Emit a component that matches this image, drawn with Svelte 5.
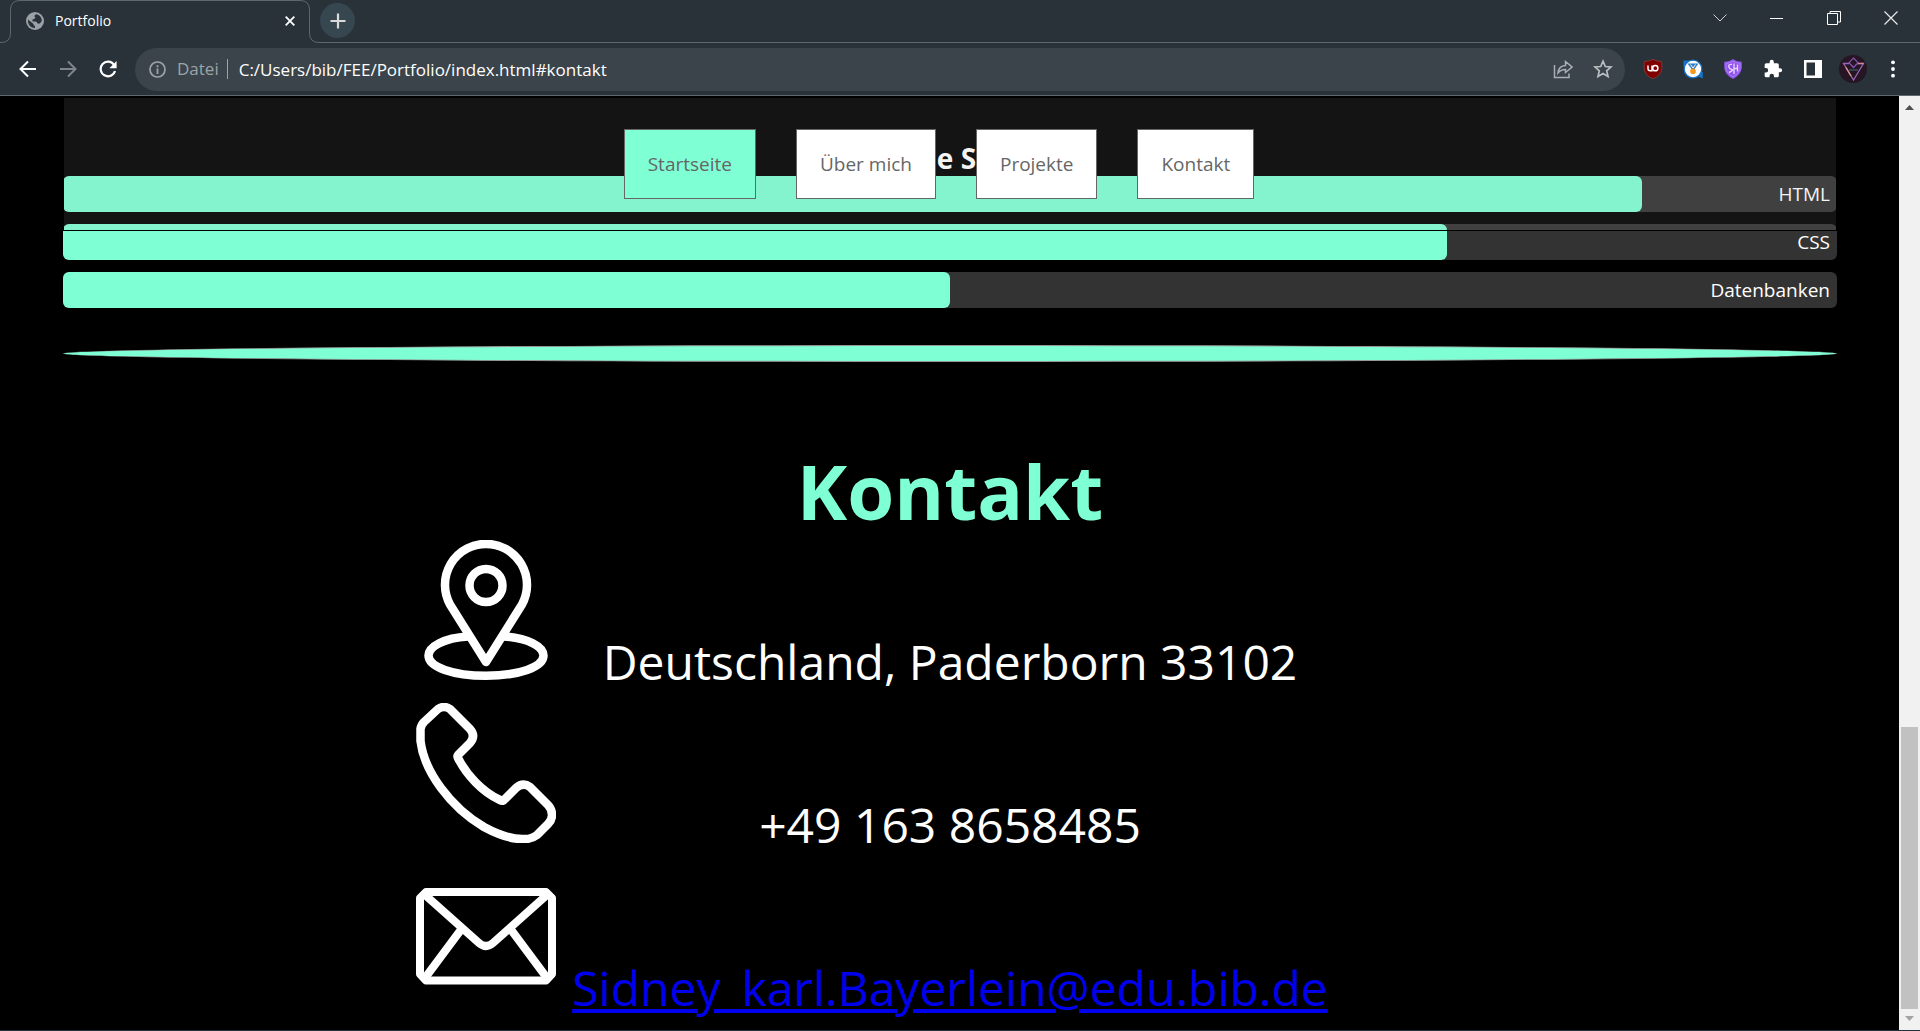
<script>
  const nav = [
    { label: 'Startseite', href: '#start', active: true },
    { label: 'Über mich', href: '#ueber-mich' },
    { label: 'Projekte', href: '#projekte' },
    { label: 'Kontakt', href: '#kontakt' }
  ];
  const skills = [
    { name: 'HTML', level: 89 },
    { name: 'CSS', level: 78 },
    { name: 'Datenbanken', level: 50 }
  ];
</script>

<div class="window">
  <header class="chrome">
    <div class="tabstrip">
      <svg class="outline" viewBox="0 0 320 43" aria-hidden="true">
        <path d="M0 42.500H1Q10.500 42.500 10.500 33V10Q10.500.500 20 .500H300Q309.500.500 309.500 10V33Q309.500 42.500 319 42.500H320" fill="none" stroke="#5b686d" />
      </svg>
      <div class="tab">
        <svg width="18" height="18" viewBox="0 0 18 18" aria-hidden="true">
          <circle cx="9" cy="9" r="9" fill="#9ba2a6" />
          <path d="M10.500 2.200C8 3 8 5 9.500 5.300C8.500 7.500 7.500 7 6.500 7.500V9.500H9.500C11 9.500 10.500 11 12 11.500C13.500 12 14.500 11 15.800 9C16 6.500 14.500 4 12.500 3ZM2 7.500L7.500 12C7.500 13.500 8.500 13.500 9 14V16C5 16 1.500 12.500 2 7.500Z" fill="#283238" />
        </svg>
        <span class="title">Portfolio</span>
        <button aria-label="Tab schließen">
          <svg width="10" height="10" viewBox="0 0 10 10"><path d="M.7.7L9.300 9.300M9.300.7L.7 9.300" stroke="#fff" stroke-width="1.800" /></svg>
        </button>
      </div>
      <button class="newtab" aria-label="Neuer Tab">
        <svg width="16" height="16" viewBox="0 0 16 16"><path d="M8 .5V15.500M.5 8H15.500" stroke="#dadada" stroke-width="2.200" /></svg>
      </button>
      <div class="controls">
        <button aria-label="Tabs durchsuchen"><svg width="14" height="14" viewBox="0 0 14 14"><path d="M.5 3.500L7 10L13.500 3.500" fill="none" stroke="#cfd2d4" /></svg></button>
        <button aria-label="Minimieren"><svg width="14" height="14" viewBox="0 0 14 14"><path d="M0 7.500H13" stroke="#fff" /></svg></button>
        <button aria-label="Verkleinern"><svg width="14" height="14" viewBox="0 0 14 14"><path d="M.5 2.500H10.500V13.500H.5ZM3 2V.500H13.500V11H11" fill="none" stroke="#fff" /></svg></button>
        <button aria-label="Schließen"><svg width="14" height="14" viewBox="0 0 14 14"><path d="M.5.5L13.500 13.500M13.500.5L.5 13.500" stroke="#e8e8e8" stroke-width="1.200" /></svg></button>
      </div>
    </div>
    <div class="toolbar">
      <button class="tool" aria-label="Zurück"><svg width="18" height="18" viewBox="0 0 18 18"><path d="M17 9H2M9 1.500L1.500 9L9 16.500" fill="none" stroke="#fff" stroke-width="2" /></svg></button>
      <button class="tool" aria-label="Vorwärts"><svg width="18" height="18" viewBox="0 0 18 18"><path d="M1 9H16M9 1.500L16.500 9L9 16.500" fill="none" stroke="#7f868a" stroke-width="2" /></svg></button>
      <button class="tool" aria-label="Neu laden"><svg width="18" height="18" viewBox="0 0 18 18"><path d="M15 4.800A7.300 7.300 0 1 0 16 11" fill="none" stroke="#fff" stroke-width="2.200" /><path d="M17.600 1V8.200H10.400Z" fill="#fff" /></svg></button>
      <div class="omnibox">
        <svg width="17" height="17" viewBox="0 0 17 17" aria-hidden="true"><circle cx="8.500" cy="8.500" r="7.500" fill="none" stroke="#9da4a8" stroke-width="1.700" /><path d="M8.500 7.500V13M8.500 4.200V6.200" stroke="#9da4a8" stroke-width="1.800" /></svg>
        <label for="url">Datei</label>
        <input id="url" type="text" value="C:/Users/bib/FEE/Portfolio/index.html#kontakt" />
        <button class="tool" aria-label="Teilen"><svg width="20" height="20" viewBox="0 0 20 20"><path d="M1.500 6V18.500H16V14.500M5 14Q5.500 7 12.500 6.500V2.500L19 8L12.500 13.500V10.500Q8 10.500 5 14Z" fill="none" stroke="#a9afb2" stroke-width="1.500" /></svg></button>
        <button class="tool" aria-label="Lesezeichen"><svg width="20" height="20" viewBox="0 0 20 20"><path d="M10 2.200L12.300 7.500L18 8L13.700 11.800L15 17.400L10 14.400L5 17.400L6.300 11.800L2 8L7.700 7.500Z" fill="none" stroke="#b9bec1" stroke-width="1.700" /></svg></button>
      </div>
      <div class="extensions">
        <button class="tool" aria-label="uBlock Origin"><svg width="20" height="20" viewBox="0 0 20 20"><path d="M10 .3Q14 2.500 18.800 2.500V10Q18 16.500 10 19.800Q2 16.500 1.200 10V2.500Q6 2.500 10 .3Z" fill="#800000" stroke="#9a4a4e" stroke-width=".600" /><path d="M5 6.500V9.500Q5 11.800 7.200 11.800H9V6.500" fill="none" stroke="#fff" stroke-width="1.500" /><circle cx="12.300" cy="9.200" r="2.600" fill="none" stroke="#fff" stroke-width="1.500" /></svg></button>
        <button class="tool" aria-label="Erweiterung"><svg width="20" height="20" viewBox="0 0 20 20"><path d="M.5 1.500H6V8H.5ZM13 13H19.800V19.500L14 17Z" fill="#1673c8" /><circle cx="10" cy="10" r="8.800" fill="#fff" stroke="#1673c8" stroke-width="1.300" /><path d="M4.500 4.500H15.500L11.500 10H8.500Z" fill="#2d7cc4" /><path d="M7.500 5.500L10 9L12.500 5.500" fill="none" stroke="#fff" /><circle cx="10" cy="12.300" r="2.800" fill="#f8981d" /></svg></button>
        <button class="tool" aria-label="Schutz"><svg width="20" height="20" viewBox="0 0 20 20"><path d="M10 0Q13 2.500 18.800 2.800V9Q18 16 10 20Q2 16 1.200 9V2.800Q7 2.500 10 0Z" fill="#9154ee" /><path d="M10 2.200Q13 4 17 4.300V9Q16.300 14.500 10 17.800Q3.700 14.500 3 9V4.300Q7 4 10 2.200Z" fill="none" stroke="#b48af5" stroke-width=".800" /><path d="M9 5.500Q5.300 5 5.800 7.500T8.800 10.500T6 13.500M11 4.500V15M14.500 5.500V12.500M11 9.500H14.500" fill="none" stroke="#e4d2ff" stroke-width="1.400" /></svg></button>
        <button class="tool" aria-label="Erweiterungen"><svg width="20" height="20" viewBox="0 0 24 24"><path d="M20.500 11H19V7a2 2 0 0 0-2-2h-4V3.500a2.500 2.500 0 0 0-5 0V5H4a2 2 0 0 0-2 2v3.800h1.500a2.700 2.700 0 0 1 0 5.400H2V20a2 2 0 0 0 2 2h3.800v-1.500a2.700 2.700 0 0 1 5.400 0V22H17a2 2 0 0 0 2-2v-4h1.500a2.500 2.500 0 0 0 0-5Z" fill="#fff" /></svg></button>
        <button class="tool" aria-label="Seitenleiste"><svg width="20" height="20" viewBox="0 0 20 20"><path d="M1 1H19V19H1ZM3.500 3.500V16.500H12V3.500Z" fill="#fff" fill-rule="evenodd" /></svg></button>
        <button class="tool" aria-label="Profil"><svg width="28" height="28" viewBox="0 0 28 28"><circle cx="14" cy="14" r="14" fill="#261523" /><path d="M10 8.500H4.500L14.500 25L24.500 8.500H18" fill="none" stroke="#9a66b4" stroke-width="1.300" /><path d="M7 12.500L12 21" stroke="#e39a91" stroke-width="1.300" /><path d="M18 8.500H24.500" stroke="#d88a91" stroke-width="1.300" /><path d="M14.500 3L19 7.700L14.500 12.500L10 7.700Z" fill="none" stroke="#8754b5" stroke-width="1.200" /><path d="M10 15H19" stroke="#38717e" /></svg></button>
        <button class="tool" aria-label="Menü"><svg width="20" height="20" viewBox="0 0 20 20"><circle cx="10" cy="3.300" r="1.900" fill="#fff" /><circle cx="10" cy="10" r="1.900" fill="#fff" /><circle cx="10" cy="16.700" r="1.900" fill="#fff" /></svg></button>
      </div>
    </div>
  </header>

  <div class="viewport">
    <main class="page">
      <nav>
        {#each nav as item}
          <a href={item.href} class:active={item.active}>{item.label}</a>
        {/each}
      </nav>

      <section class="skills">
        <h2>Meine Skills</h2>
        {#each skills as skill}
          <div class="bar">
            <div class="fill" style="width: {skill.level}%"></div>
            <span>{skill.name}</span>
          </div>
        {/each}
      </section>

      <hr />

      <section class="contact" id="kontakt">
        <h1>Kontakt</h1>
        <div class="row">
          <svg viewBox="0 0 140 140" aria-hidden="true" fill="none" stroke="#fff" stroke-width="8.500" stroke-linejoin="round">
            <path d="M70 122L34 64.500A41 41 0 1 1 106 64.500Z" />
            <circle cx="70" cy="45.500" r="16.500" />
            <path d="M52 96.500C28 98 12.500 106.500 12.500 115.500C12.500 127 37 135.700 70 135.700S127.500 127 127.500 115.500C127.500 106.500 112 98 88 96.500" />
          </svg>
          <p>Deutschland, Paderborn 33102</p>
        </div>
        <div class="row">
          <svg viewBox="0 0 140 140" aria-hidden="true" fill="none" stroke="#fff" stroke-width="8.500" stroke-linejoin="round">
            <path d="M22 6Q28 2 34 6L54 26Q60 33 54 40L42 52Q41 53 42 55C50 71 66 89 84 97Q87 99 89 96L100 85Q107 79 114 84L132 102Q136 106 136 112Q136 117 132 121L121 132Q116 136 109 136Q92 137 68 124C34 104 8 68 4.500 38V26Q5 22 8 19Z" />
          </svg>
          <p>+49 163 8658485</p>
        </div>
        <div class="row">
          <svg viewBox="0 0 140 140" aria-hidden="true" fill="none" stroke="#fff" stroke-width="8" stroke-linejoin="round">
            <path d="M10 26H130L136 32V108L130 114.500H10L4 108V32Z" />
            <path d="M8 28L63 77Q70 83 77 77L132 28M9 112L44 65M131 112L96 65" />
          </svg>
          <p><a href="mailto:Sidney_karl.Bayerlein@edu.bib.de">Sidney_karl.Bayerlein@edu.bib.de</a></p>
        </div>
      </section>
    </main>
    <div class="scrollbar" aria-hidden="true">
      <svg width="9" height="5" viewBox="0 0 9 5"><path d="M0 5L4.500 0L9 5Z" fill="#505050" /></svg>
      <div class="track"><div class="thumb"></div></div>
      <svg width="9" height="5" viewBox="0 0 9 5"><path d="M0 0H9L4.500 5Z" fill="#a3a3a3" /></svg>
    </div>
  </div>
  <footer></footer>
</div>

<style>
  :global(body) { margin: 0; background: #000; }
  * { box-sizing: border-box; }
  button { border: 0; padding: 0; background: none; display: flex; align-items: center; justify-content: center; }
  .window { display: flex; flex-direction: column; height: 100vh; overflow: hidden; font-family: "Trebuchet MS", "Open Sans", sans-serif; color: #fff; }

  .chrome { flex: none; background: #283238; border-bottom: 1px solid #5b686d; font-family: "Segoe UI", "Open Sans", sans-serif; }
  .tabstrip { position: relative; display: flex; height: 43px; }
  .tabstrip::after { content: ""; position: absolute; left: 320px; right: 0; bottom: 0; height: 1px; background: #5b686d; }
  .outline { position: absolute; left: 0; top: 0; width: 320px; height: 43px; }
  .tab { display: flex; align-items: center; width: 320px; padding: 0 25px 1px 26px; }
  .title { flex: 1; margin-left: 11px; font-size: 14px; line-height: 20px; }
  .newtab { width: 35px; height: 35px; margin-top: 3px; border-radius: 50%; background: #37474f; }
  .controls { display: flex; margin-left: auto; margin-right: 1px; height: 36px; }
  .controls button { width: 57px; }
  .toolbar { display: flex; align-items: center; height: 52px; padding: 0 7px 0 8px; }
  .tool { width: 40px; height: 40px; flex: none; }
  .omnibox { display: flex; flex: 1; align-items: center; height: 43px; margin-left: 7px; padding: 0 2px 0 14px; border-radius: 22px; background: #3a444a; font-size: 17px; }
  .omnibox label { margin-left: 11px; padding-right: 8px; line-height: 20px; border-right: 1px solid #9da4a8; color: #9da4a8; }
  .omnibox input { flex: 1; min-width: 0; border: 0; padding: 0 0 0 11px; background: none; color: #fff; font: inherit; outline: 0; }
  .extensions { display: flex; margin-left: 8px; }

  .viewport { display: flex; flex: 1; min-height: 0; }
  .page { position: relative; flex: 1; overflow: hidden; padding: 0 62px 0 63px; background: #000; }
  nav { position: absolute; top: 1px; left: 63px; right: 62px; z-index: 1; display: flex; justify-content: center; gap: 40px; height: 134px; padding: 31px 22px 0 0; border: 1px solid #000; background: rgba(166, 166, 166, 0.12); }
  nav a { height: 70px; padding: 0 23px; border: 1px solid #666; background: #fff; color: #666; font-size: 19px; line-height: 68px; text-decoration: none; }
  nav a.active { background: #7fffd4; }

  .skills { padding-top: 44px; }
  .skills h2 { margin: 0; font-size: 28px; line-height: 36px; text-align: center; }
  .bar { display: grid; align-items: center; height: 36px; margin-bottom: 12px; border-radius: 6px; background: #333; }
  .bar > * { grid-area: 1 / 1; }
  .fill { height: 36px; border-radius: 6px; background: #7fffd4; }
  .bar span { padding-right: 7px; text-align: right; font-size: 19px; line-height: 24px; }
  hr { height: 17px; margin: 37px 0 0; border: 1px solid #999; border-radius: 50%; background: #7fffd4; }

  .contact { max-width: 1068px; margin: 0 auto; }
  .contact h1 { margin: 80px 0 0; color: #7fffd4; font-size: 76px; line-height: 98px; text-align: center; }
  .row { display: grid; grid-template-columns: 140px 1fr 140px; align-items: baseline; height: 140px; margin-bottom: 23px; }
  .row svg { width: 140px; height: 140px; }
  .row p { margin: 0; font-size: 48px; line-height: 60px; text-align: center; white-space: nowrap; }
  .row a { color: #00e; }

  .scrollbar { display: flex; flex-direction: column; align-items: center; flex: none; width: 21px; padding: 9px 0; background: #f1f1f1; }
  .track { display: flex; flex-direction: column; justify-content: flex-end; flex: 1; width: 17px; margin: 7px 0; }
  .thumb { height: 31.600%; background: #c1c1c1; }
  footer { height: 1px; flex: none; background: #22323a; }
</style>
